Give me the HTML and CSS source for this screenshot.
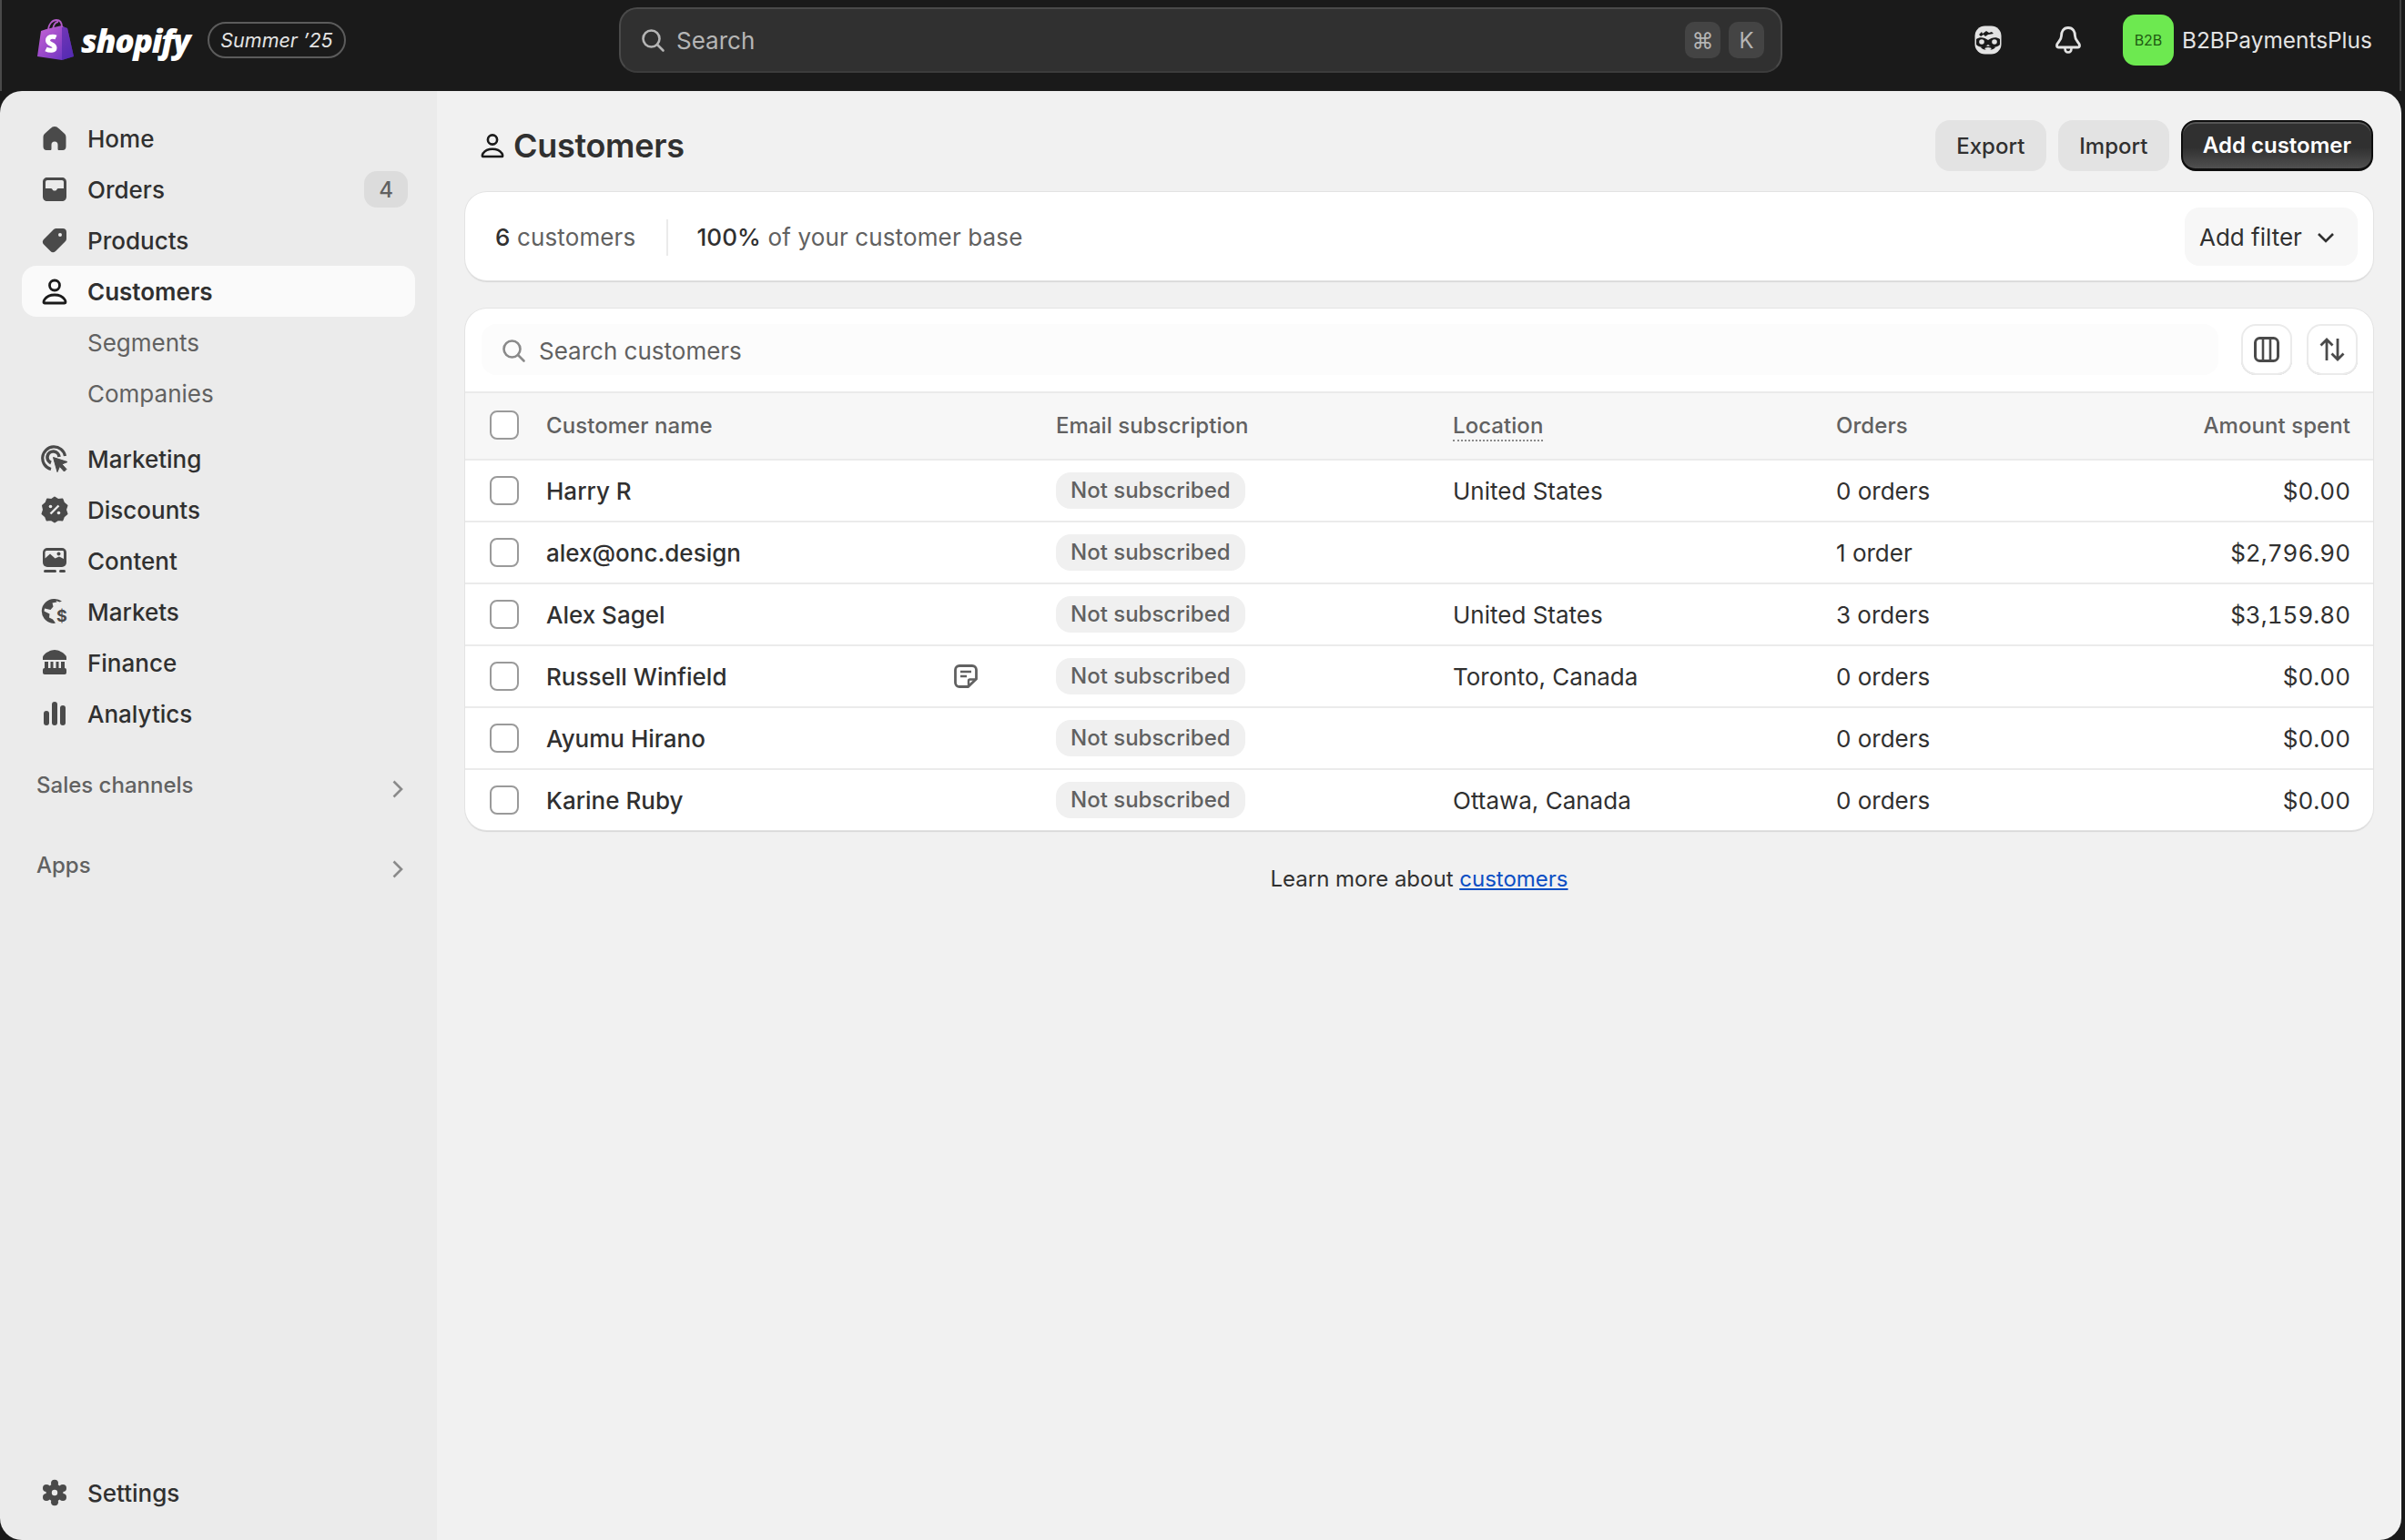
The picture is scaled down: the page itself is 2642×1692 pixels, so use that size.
FILE: index.html
```html
<!DOCTYPE html>
<html lang="en">
<head>
<meta charset="utf-8">
<title>Customers</title>
<link rel="stylesheet" href="styles.css">
</head>
<body>
<header class="topbar">
  <div class="brand">
    <svg class="bag" viewBox="0 0 40 46" width="40" height="46">
      <defs>
        <linearGradient id="bagg" x1="0" y1="0" x2="1" y2="1"><stop offset="0" stop-color="#c765d6"/><stop offset=".55" stop-color="#9345c8"/><stop offset="1" stop-color="#5a2fc0"/></linearGradient>
      </defs>
      <path d="M10 11 L27 7 L30 9 L33 10 L40 41 L27 45 L0 41 L4 13Z" fill="url(#bagg)"/>
      <path d="M27 7 L30 9 L33 10 L40 41 L27 45Z" fill="#4b27a8" opacity=".6"/>
      <path d="M12 13 C12 5 17 1 21 1 C25 1 27 4 27 9 M17 11 C18 6 20 3 23 3" fill="none" stroke="#b45cc9" stroke-width="1.8"/>
      <path d="M20.500 20 C16 18 11.500 20 11.500 23.500 C11.500 28 19 27 19 31.500 C19 35 13.500 35 9.500 33" fill="none" stroke="#fff" stroke-width="5"/>
    </svg>
    <span class="wordmark">shopify</span>
    <span class="edition">Summer ’25</span>
  </div>
  <div class="gsearch">
    <svg class="ic-search" viewBox="0 0 28 28" width="28" height="28"><circle cx="12.500" cy="12.500" r="9" fill="none" stroke="#b5b5b5" stroke-width="2.600"/><path d="M19 19l6.500 6.500" stroke="#b5b5b5" stroke-width="2.600" stroke-linecap="round"/></svg>
    <span class="gsearch-text">Search</span>
    <span class="kbd">⌘</span>
    <span class="kbd">K</span>
  </div>
  <div class="account">
    <svg class="face" viewBox="0 0 30 32" width="30" height="32">
      <rect x="0.500" y="0.500" width="29" height="31" rx="11" fill="#e3e3e3"/>
      <path d="M5 10l3-3 1 2 4-3 3 2 3-1 2 2-6 1-3 2-2-2-3 2Z" fill="#1a1a1a"/>
      <path d="M2 15C6 12 11 13 15 16C19 13 24 12 28 15V21C24 25 19 24 15 21C11 24 6 25 2 21Z" fill="#1a1a1a"/>
      <circle cx="8" cy="18" r="2.800" fill="#e3e3e3"/><circle cx="22" cy="18" r="2.800" fill="#e3e3e3"/>
      <path d="M7 24C10 22 13 22 15 23C17 22 20 22 23 24C21 28 9 28 7 24Z" fill="#1a1a1a"/>
      <ellipse cx="15" cy="25.500" rx="3.500" ry="1.500" fill="#e3e3e3"/>
    </svg>
    <svg class="bell" viewBox="0 0 28 30" width="28" height="30"><path d="M14 1.500C8.500 1.500 6.500 6 6.500 10.500c0 5.500-5 7-5 10.500 0 1.200.8 2 2 2h21c1.200 0 2-.8 2-2 0-3.500-5-5-5-10.500C21.500 6 19.500 1.500 14 1.500Z" fill="none" stroke="#e3e3e3" stroke-width="2.800"/><path d="M10.500 24c0 3 1.500 4.500 3.500 4.500s3.500-1.500 3.500-4.500" fill="none" stroke="#e3e3e3" stroke-width="2.600"/></svg>
    <span class="avatar">B2B</span>
    <span class="shop">B2BPaymentsPlus</span>
  </div>
</header>

<div class="shell">
  <nav class="sidebar">
    <ul class="nav">
      <li class="nav-item"><svg class="nav-ic" viewBox="-1 -1 30 30"><path d="M14 1c-2 0-3 .8-5 2.600L3.500 8.500C2 9.800 1.500 11 1.500 13v10c0 2.500 1.500 4 3.500 4h4c1 0 1.500-.5 1.500-1.500V21a3.500 3.500 0 0 1 7 0v4.500c0 1 .5 1.500 1.500 1.500h4c2 0 3.500-1.500 3.500-4V13c0-2-.5-3.200-2-4.500L19 3.600C17 1.800 16 1 14 1Z"/></svg><span>Home</span></li>
      <li class="nav-item"><svg class="nav-ic" viewBox="-1 -1 30 30"><path fill-rule="evenodd" d="M6 1h16c3 0 5 2 5 5v16c0 3-2 5-5 5H6c-3 0-5-2-5-5V6c0-3 2-5 5-5Zm0 3c-1.200 0-2 .8-2 2v7h5.500c1 0 1.500.4 2 1 .5 1 1.200 1.500 2.500 1.500s2-.5 2.500-1.500c.5-.6 1-1 2-1H24V6c0-1.200-.8-2-2-2Z"/></svg><span>Orders</span><span class="count">4</span></li>
      <li class="nav-item"><svg class="nav-ic" viewBox="-1 -1 30 30"><path fill-rule="evenodd" d="M16 1h7c2.500 0 4 1.500 4 4v7c0 1.500-.5 2.500-1.500 3.500L15 26c-1.800 1.600-4 1.600-5.500 0L2 18.500C.4 17 .4 14.800 2 13L12.500 2.500C13.500 1.500 14.500 1 16 1Zm4 5a2 2 0 1 0 0 4 2 2 0 0 0 0-4Z"/></svg><span>Products</span></li>
      <li class="nav-item is-active"><svg class="nav-ic" viewBox="-1 -1 30 30"><circle cx="14" cy="7.500" r="5.500" fill="none" stroke="#1a1a1a" stroke-width="2.800"/><path d="M2 26c0-1 .3-2 1-3 2-3 6-5 11-5s9 2 11 5c.7 1 1 2 1 3 0 .5-.5 1-1 1H3c-.5 0-1-.5-1-1Z" fill="none" stroke="#1a1a1a" stroke-width="2.800"/></svg><span>Customers</span></li>
      <li class="nav-item nav-sub"><span>Segments</span></li>
      <li class="nav-item nav-sub"><span>Companies</span></li>
    </ul>
    <ul class="nav nav-second">
      <li class="nav-item"><svg class="nav-ic" viewBox="0 0 30 30"><path d="M11 26.500A12.500 12.500 0 1 1 26.500 12" fill="none" stroke="#4a4a4a" stroke-width="3.200"/><path d="M11 19.500A6.500 6.500 0 1 1 20 13" fill="none" stroke="#4a4a4a" stroke-width="3.600"/><path d="M13.500 13.500l15.500 5-6 2.500 5 5.500-2.500 2.500-5-5.500-2.500 6Z" stroke="#4a4a4a" stroke-width="1" stroke-linejoin="round"/></svg><span>Marketing</span></li>
      <li class="nav-item"><svg class="nav-ic" viewBox="0 0 30 30"><path d="M15 1.500l4 2.500 4.500-.5 1.500 4 3.500 3-1.500 4.500 1.500 4.500-3.500 3-1.500 4-4.500-.5-4 2.500-4-2.500-4.500.5-1.500-4-3.500-3 1.500-4.500L2 10.500l3.500-3 1.500-4 4.500.5Z" stroke="#4a4a4a" stroke-width="2" stroke-linejoin="round"/><path d="M10.500 19.500l9-9" stroke="#ebebeb" stroke-width="2.400"/><circle cx="10.500" cy="11.500" r="1.800" fill="#ebebeb"/><circle cx="19.500" cy="18.500" r="1.800" fill="#ebebeb"/></svg><span>Discounts</span></li>
      <li class="nav-item"><svg class="nav-ic" viewBox="-1 -1 30 30"><rect x="1" y="0" width="26" height="21" rx="5"/><path d="M5.500 3h17c1 0 1.500.5 1.500 1.500V12l-5-2.500-4.500 2-5.500-5-5.500 5V4.500C4 3.500 4.500 3 5.500 3Z" fill="#ebebeb"/><circle cx="18.500" cy="6.500" r="2"/><rect x="2" y="24" width="14" height="3" rx="1.500"/><rect x="19" y="24" width="7" height="3" rx="1.500"/></svg><span>Content</span></li>
      <li class="nav-item"><svg class="nav-ic" viewBox="0 0 30 30"><path d="M14 1a13.500 13.500 0 0 0-2 26.800c1.500.2 3 .2 4-.2l-3-4-4-2 .5-4-6-3 .5-3 6.500 1.500 3-3.500-1-4 5-1-1-1.500 4 1.500 2.500-1A13.500 13.500 0 0 0 14 1Z"/><text class="nav-dollar" x="17" y="26">$</text></svg><span>Markets</span></li>
      <li class="nav-item"><svg class="nav-ic" viewBox="-1 -1 30 30"><path d="M14 0C18 0 24 3 26 6c1 1 1 2 1 3v2H1V9c0-1 0-2 1-3 2-3 8-6 12-6Z"/><path d="M3 13h4v8H3zM9.500 13h3v8h-3zM15.500 13h3v8h-3zM21 13h4v8h-4z"/><rect x="1" y="20" width="26" height="7" rx="2"/></svg><span>Finance</span></li>
      <li class="nav-item"><svg class="nav-ic" viewBox="-1 -1 30 30"><rect x="2" y="11" width="6" height="16" rx="3"/><rect x="11" y="1" width="6" height="26" rx="3"/><rect x="20" y="5" width="6" height="22" rx="3"/></svg><span>Analytics</span></li>
    </ul>
    <div class="group"><span>Sales channels</span><svg class="chev" viewBox="0 0 14 22" width="14" height="22"><path d="M2.500 2.500l8.500 8.500-8.500 8.500" fill="none" stroke="#8a8a8a" stroke-width="2.600"/></svg></div>
    <div class="group"><span>Apps</span><svg class="chev" viewBox="0 0 14 22" width="14" height="22"><path d="M2.500 2.500l8.500 8.500-8.500 8.500" fill="none" stroke="#8a8a8a" stroke-width="2.600"/></svg></div>
    <div class="nav-item settings"><svg class="nav-ic" viewBox="0 0 30 30"><circle cx="15" cy="15" r="9.500"/><circle cx="15" cy="4.800" r="4"/><circle cx="24" cy="10" r="4"/><circle cx="24" cy="20" r="4"/><circle cx="15" cy="25.200" r="4"/><circle cx="6" cy="20" r="4"/><circle cx="6" cy="10" r="4"/><circle cx="15" cy="15" r="3.200" fill="#ebebeb"/></svg><span>Settings</span></div>
  </nav>

  <main class="main">
    <div class="page-head">
      <svg class="head-ic" viewBox="0 0 28 30" width="26" height="28"><circle cx="14" cy="8" r="5.500" fill="none" stroke="#1a1a1a" stroke-width="2.800"/><path d="M2 27c0-1 .3-2 1-3 2-3 6-5 11-5s9 2 11 5c.7 1 1 2 1 3 0 .5-.5 1-1 1H3c-.5 0-1-.5-1-1Z" fill="none" stroke="#1a1a1a" stroke-width="2.800"/></svg>
      <h1>Customers</h1>
      <div class="actions">
        <button class="btn">Export</button>
        <button class="btn">Import</button>
        <button class="btn btn-primary">Add customer</button>
      </div>
    </div>

    <section class="card stats">
      <span class="stat"><b>6</b> customers</span>
      <span class="stat-div"></span>
      <span class="stat"><b>100%</b> of your customer base</span>
      <span class="filter">Add filter<svg viewBox="0 0 20 14" width="20" height="14"><path d="M2 3l8 8 8-8" fill="none" stroke="#303030" stroke-width="2.600"/></svg></span>
    </section>

    <section class="card list">
      <div class="list-tools">
        <div class="lsearch">
          <svg viewBox="0 0 28 28" width="28" height="28"><circle cx="12.500" cy="12.500" r="9" fill="none" stroke="#8a8a8a" stroke-width="2.600"/><path d="M19 19l6.500 6.500" stroke="#8a8a8a" stroke-width="2.600" stroke-linecap="round"/></svg>
          <span>Search customers</span>
        </div>
        <span class="tool"><svg viewBox="0 0 28 28" width="28" height="28"><rect x="1.500" y="1.500" width="25" height="25" rx="5" fill="none" stroke="#4a4a4a" stroke-width="3"/><path d="M10 2v24M18 2v24" stroke="#4a4a4a" stroke-width="2.600"/></svg></span>
        <span class="tool"><svg viewBox="0 0 28 28" width="28" height="28"><path d="M8 26V3M1.500 9.500 8 3l6.500 6.500M20 2v23M13.500 18.500 20 25l6.500-6.500" fill="none" stroke="#4a4a4a" stroke-width="2.800"/></svg></span>
      </div>
      <div class="row row-head">
        <span class="check"></span><span>Customer name</span><span></span><span>Email subscription</span><span><span class="dotted">Location</span></span><span>Orders</span><span class="amount">Amount spent</span>
      </div>
      <div class="row">
        <span class="check"></span><span class="name">Harry R</span><span></span><span><span class="tag">Not subscribed</span></span><span>United States</span><span>0 orders</span><span class="amount">$0.00</span>
      </div>
      <div class="row">
        <span class="check"></span><span class="name">alex@onc.design</span><span></span><span><span class="tag">Not subscribed</span></span><span></span><span>1 order</span><span class="amount">$2,796.90</span>
      </div>
      <div class="row">
        <span class="check"></span><span class="name">Alex Sagel</span><span></span><span><span class="tag">Not subscribed</span></span><span>United States</span><span>3 orders</span><span class="amount">$3,159.80</span>
      </div>
      <div class="row">
        <span class="check"></span><span class="name">Russell Winfield</span><svg class="note" viewBox="0 0 26 26" width="26" height="26"><path d="M6 1.500h14c2.500 0 4.500 2 4.500 4.500v10L15.500 24.500H6c-2.500 0-4.500-2-4.500-4.500V6c0-2.500 2-4.500 4.500-4.500Z" fill="none" stroke="#616161" stroke-width="2.800"/><path d="M7 8h12M7 13h7" stroke="#616161" stroke-width="2.600"/><path d="M16 24v-6c0-1 .5-1.500 1.500-1.500H24" fill="none" stroke="#616161" stroke-width="2.400"/></svg><span><span class="tag">Not subscribed</span></span><span>Toronto, Canada</span><span>0 orders</span><span class="amount">$0.00</span>
      </div>
      <div class="row">
        <span class="check"></span><span class="name">Ayumu Hirano</span><span></span><span><span class="tag">Not subscribed</span></span><span></span><span>0 orders</span><span class="amount">$0.00</span>
      </div>
      <div class="row">
        <span class="check"></span><span class="name">Karine Ruby</span><span></span><span><span class="tag">Not subscribed</span></span><span>Ottawa, Canada</span><span>0 orders</span><span class="amount">$0.00</span>
      </div>
    </section>

    <p class="learn">Learn more about <a href="#">customers</a></p>
  </main>
</div>
</body>
</html>
```
FILE: styles.css
```css
* { box-sizing: border-box; }
html, body { margin: 0; height: 100%; }
body {
  background: #1a1a1a;
  color: #303030;
  font-family: Inter, "Liberation Sans", sans-serif;
  font-size: 26px;
  overflow: hidden;
}
ul { list-style: none; margin: 0; padding: 0; }

.topbar { height: 100px; display: flex; align-items: center; margin-right: 4px; padding: 0 0 12px 39px; border-left: 2px solid #4a4a4a; border-right: 2px solid #3f3f3f; }
.brand { display: flex; align-items: center; width: 639px; }
.bag { flex: none; }
.wordmark { font-family: "Open Sans", sans-serif; font-weight: 800; font-style: italic; font-size: 35.500px; letter-spacing: -1.300px; color: #fff; margin-left: 8px; line-height: 44px; }
.edition { margin-left: 20px; height: 40px; padding: 0 12px; border: 2px solid #5c5c5c; border-radius: 20px; color: #e3e3e3; font-style: italic; font-size: 21.500px; line-height: 36px; white-space: nowrap; }

.gsearch { width: 1278px; height: 72px; display: flex; align-items: center; gap: 4px; background: #303030; border: 2px solid #4a4a4a; border-bottom-color: #3c3c3c; border-radius: 20px; padding: 0 18px 0 21px; color: #b5b5b5; }
.gsearch-text { flex: 1; margin-left: 8px; }
.kbd { width: 39px; height: 40px; border-radius: 10px; background: #444; display: flex; align-items: center; justify-content: center; font-size: 24px; margin-left: 5px; }

.account { flex: 1; display: flex; align-items: center; padding-left: 211px; }
.face { margin-right: 59px; }
.bell { margin-right: 46px; }
.avatar { width: 56px; height: 56px; border-radius: 14px; background: #6de950; color: #1e5a12; font-size: 16px; display: flex; align-items: center; justify-content: center; }
.shop { margin-left: 9px; color: #e3e3e3; font-size: 24.400px; white-space: nowrap; }

.shell { display: flex; height: 1592px; margin-right: 4px; border-radius: 24px; overflow: hidden; }
.sidebar { width: 480px; flex: none; background: #ebebeb; padding: 24px; display: flex; flex-direction: column; }
.nav-item { height: 56px; display: flex; align-items: center; padding-left: 21px; border-radius: 16px; font-weight: 500; color: #303030; }
.nav-ic { width: 30px; height: 30px; flex: none; fill: #4a4a4a; margin-right: 21px; }
.nav-dollar { font-family: Inter, sans-serif; font-size: 18px; font-weight: 700; fill: #4a4a4a; }
.is-active { background: #fafafa; font-weight: 600; }
.nav-sub { padding-left: 72px; font-weight: 400; color: #616161; }
.count { margin-left: auto; margin-right: 8px; width: 48px; height: 40px; border-radius: 14px; background: #dcdcdc; color: #616161; font-size: 24px; display: flex; align-items: center; justify-content: center; }
.nav-second { margin-top: 16px; }
.group { display: flex; align-items: center; justify-content: space-between; height: 88px; padding: 0 12px 0 16px; font-size: 24px; font-weight: 500; color: #616161; }
.nav-second + .group { margin-top: 6px; }
.chev { margin-top: 9px; }
.settings { margin-top: auto; }

.main { flex: 1; background: #f1f1f1; padding: 32px 31px 0; }
.page-head { height: 56px; display: flex; align-items: center; }
.head-ic { margin: 0 10px 0 17px; }
h1 { margin: 0; font-size: 36px; font-weight: 600; color: #303030; letter-spacing: -0.300px; }
.actions { margin-left: auto; display: flex; gap: 13px; }
.btn { height: 56px; padding: 0 23.500px; border: 0; border-radius: 16px; background: #e3e3e3; color: #303030; font: 500 24px Inter, sans-serif; }
.btn-primary { padding: 0 22px; background: linear-gradient(#303030 55%, #505050); color: #fff; font-weight: 600; border: 2px solid #0e0e0e; border-bottom-width: 3px; box-shadow: inset 0 2px 0 #555; }

.card { background: #fff; border-radius: 24px; box-shadow: 0 0 0 1px #e3e3e3, 0 2px 1px #d6d6d6; }
.stats { margin-top: 23px; height: 97px; display: flex; align-items: center; padding: 2px 17px 0 33px; }
.stat { color: #616161; white-space: nowrap; letter-spacing: .130px; }
.stat b { font-weight: 500; color: #303030; }
.stat-div { width: 2px; height: 40px; background: #ebebeb; margin: 0 31px 0 34px; }
.filter { margin-left: auto; margin-top: -2px; width: 190px; height: 64px; padding: 2px 0 0 16px; border-radius: 16px; background: #f7f7f7; display: flex; align-items: center; gap: 16px; color: #303030; }

.list { margin-top: 31px; overflow: hidden; }
.list-tools { height: 91px; display: flex; align-items: center; gap: 16px; padding: 0 17px 1px 18px; }
.lsearch { flex: 1; height: 56px; margin-right: 9px; border-radius: 16px; background: #fcfcfc; display: flex; align-items: center; gap: 14px; padding: 2px 0 0 21px; color: #616161; }
.tool { width: 56px; height: 56px; border-radius: 16px; background: #fff; box-shadow: inset 0 0 0 2px #ebebeb, inset 0 -2px 0 #c9c9c9; display: flex; align-items: center; justify-content: center; }

.row { display: grid; grid-template-columns: 62px 445px 115px 436px 421px 385px 1fr; align-items: center; height: 68px; padding: 0 25px 0 27px; border-top: 2px solid #ebebeb; }
.row-head { height: 74px; padding-bottom: 2px; background: #f7f7f7; font-size: 24px; font-weight: 500; letter-spacing: .060px; color: #616161; }
.check { width: 32px; height: 32px; border-radius: 8px; background: #fff; border: 2px solid #9a9a9a; }
.name { font-weight: 500; }
.note { display: block; margin-left: 3px; }
.tag { display: inline-block; height: 40px; padding: 0 16px; border-radius: 16px; background: #f0f0f0; color: #616161; font-size: 24px; font-weight: 500; line-height: 40px; }
.amount { text-align: right; font-variant-numeric: tabular-nums; }
.dotted { border-bottom: 2px dotted #8a8a8a; padding-bottom: 1px; }

.learn { margin: 39px 0 0; text-align: center; font-size: 24px; color: #303030; }
.learn a { color: #0c4fc4; }
```
